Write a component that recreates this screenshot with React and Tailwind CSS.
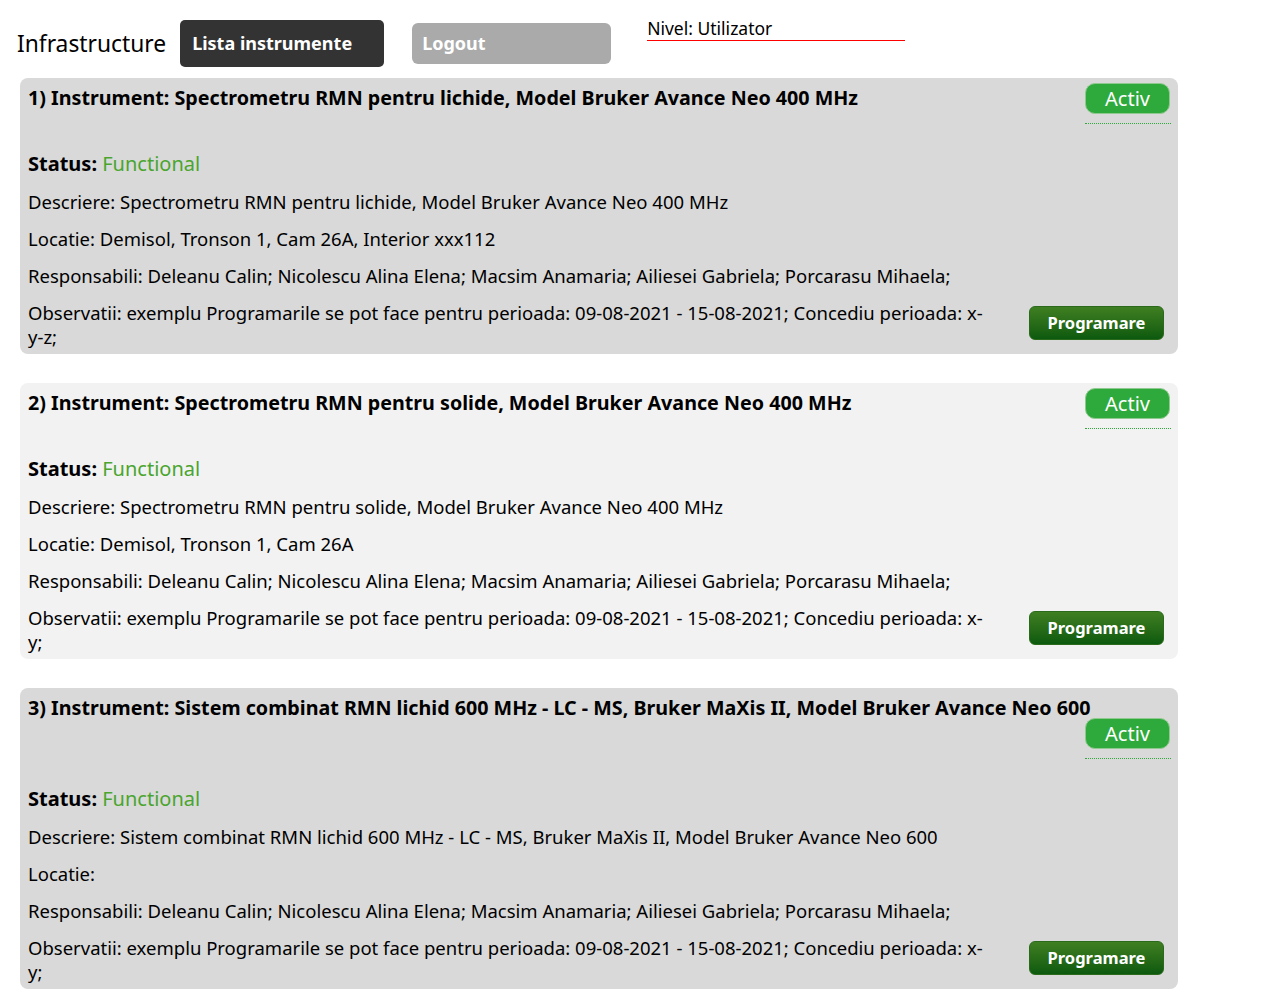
import React from "react";

const items = [
  {
    n: 1,
    title: "Spectrometru RMN pentru lichide, Model Bruker Avance Neo 400 MHz",
    desc: "Spectrometru RMN pentru lichide, Model Bruker Avance Neo 400 MHz",
    loc: "Demisol, Tronson 1, Cam 26A, Interior xxx112",
    obs: "exemplu Programarile se pot face pentru perioada: 09-08-2021 - 15-08-2021; Concediu perioada: x-y-z;",
    bg: "bg-[#d9d9d9]",
  },
  {
    n: 2,
    title: "Spectrometru RMN pentru solide, Model Bruker Avance Neo 400 MHz",
    desc: "Spectrometru RMN pentru solide, Model Bruker Avance Neo 400 MHz",
    loc: "Demisol, Tronson 1, Cam 26A",
    obs: "exemplu Programarile se pot face pentru perioada: 09-08-2021 - 15-08-2021; Concediu perioada: x-y;",
    bg: "bg-[#f2f2f2]",
  },
  {
    n: 3,
    title: "Sistem combinat RMN lichid 600 MHz - LC - MS, Bruker MaXis II, Model Bruker Avance Neo 600",
    desc: "Sistem combinat RMN lichid 600 MHz - LC - MS, Bruker MaXis II, Model Bruker Avance Neo 600",
    loc: "",
    obs: "exemplu Programarile se pot face pentru perioada: 09-08-2021 - 15-08-2021; Concediu perioada: x-y;",
    bg: "bg-[#d9d9d9]",
  },
];

const resp = "Deleanu Calin; Nicolescu Alina Elena; Macsim Anamaria; Ailiesei Gabriela; Porcarasu Mihaela;";

function Card({ it }) {
  return (
    <div className={`${it.bg} rounded-[8px] w-[1158px] pl-[8px] pr-[7px] pt-[5px] pb-[5px] text-black`}>
      <div className="flex flex-wrap items-start justify-between">
        <div className="text-[19.7px] font-bold leading-[21px] mt-[4px]">
          {it.n}) Instrument: {it.title}
        </div>
        <div className="ml-auto pb-[9px] border-b border-dotted border-[#2ea83a] w-[86px]">
          <div className="h-[31px] w-[85px] rounded-[10px] bg-[#2eaa3c] border border-[#8fc98f] flex items-center justify-center text-white text-[20px] leading-none">
            Activ
          </div>
        </div>
      </div>
      <div className="mt-[28px] text-[20px] leading-[24px]">
        <span className="font-bold">Status: </span>
        <span className="text-[#4aa52e]">Functional</span>
      </div>
      <div className="mt-[14px] text-[18.5px] leading-[24px]">
        <p className="mb-[13px]">Descriere: {it.desc}</p>
        <p className="mb-[13px]">Locatie: {it.loc}</p>
        <p className="mb-[13px]">Responsabili: {resp}</p>
        <div className="flex items-start">
          <p className="flex-1 pr-[32px]">Observatii: {it.obs}</p>
          <div className="shrink-0 mt-[5px] mr-[7px] w-[135px] h-[34px] rounded-[6px] bg-gradient-to-b from-[#3f7f22] to-[#0b5a0f] border border-[#2a6a1a] flex items-center justify-center text-white font-bold text-[16.5px] leading-none">
            Programare
          </div>
        </div>
      </div>
    </div>
  );
}

export default function App() {
  return (
    <div className="bg-white min-h-screen" style={{ fontFamily: '"Noto Sans", sans-serif' }}>
      <div className="flex items-start pl-[17px] pt-[20px] h-[78px]">
        <div className="text-[22.8px] leading-[28px] mt-[10px] text-black">Infrastructure</div>
        <div className="ml-[14px] w-[204px] h-[47px] rounded-[5px] bg-[#333333] text-white font-bold text-[18px] flex items-center pl-[12px]">
          Lista instrumente
        </div>
        <div className="ml-[28px] mt-[3px] w-[199px] h-[41px] rounded-[6px] bg-[#aaaaaa] text-white font-bold text-[18px] flex items-center pl-[10px]">
          Logout
        </div>
        <div className="ml-[36px] -mt-[2px] w-[258px] border-b border-[#ff0000] text-[17.5px] leading-[20px] pb-[2px] text-black">
          Nivel: Utilizator
        </div>
      </div>
      <div className="pl-[20px] flex flex-col gap-[29px]">
        {items.map((it) => (
          <Card key={it.n} it={it} />
        ))}
      </div>
    </div>
  );
}
